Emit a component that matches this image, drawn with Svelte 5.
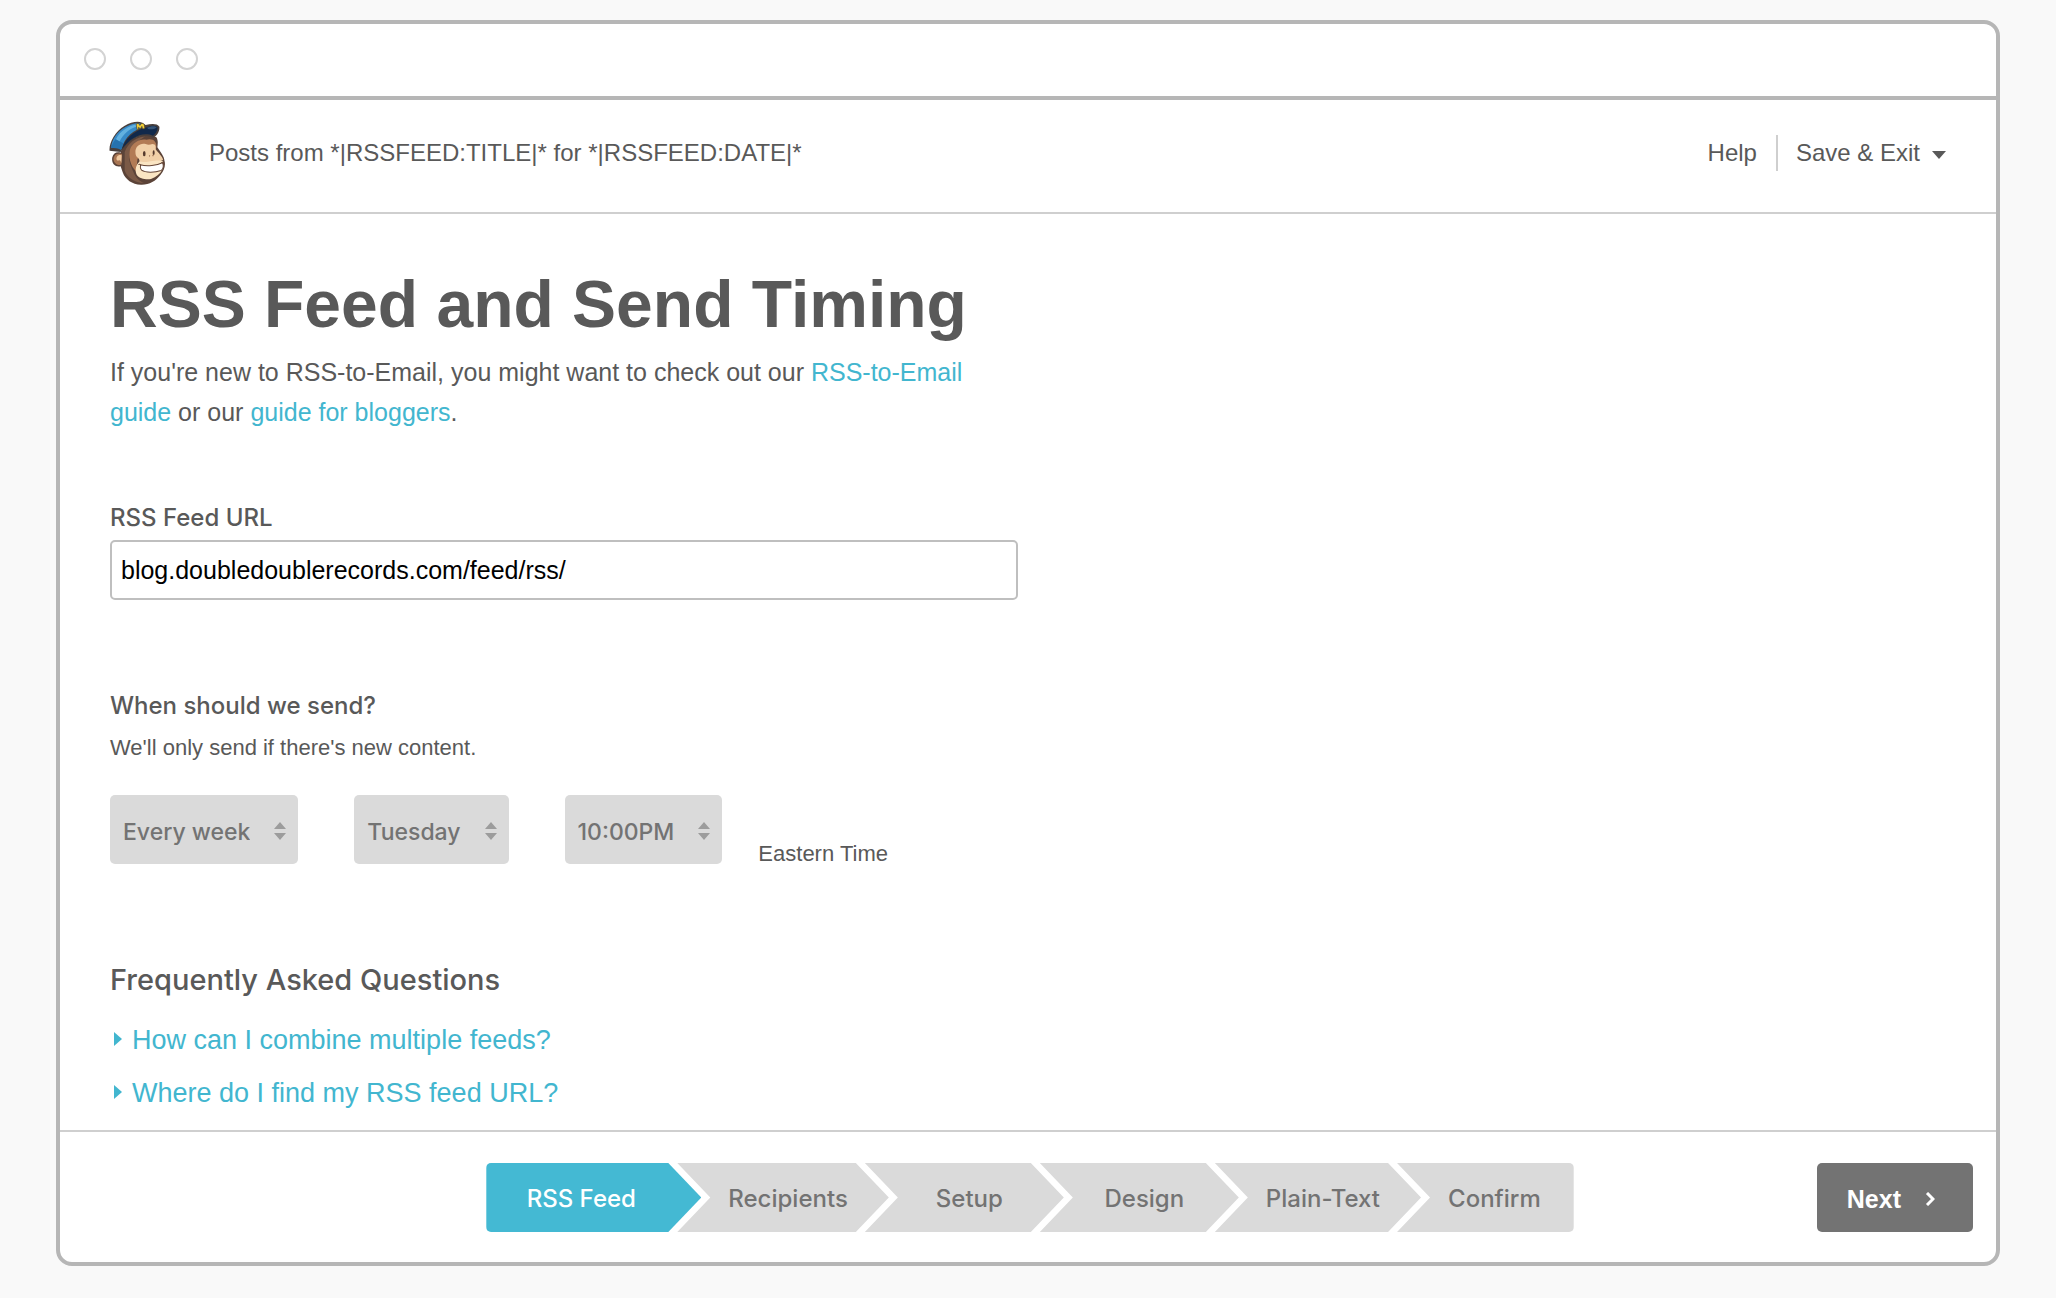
<script>
  let feedUrl = $state('blog.doubledoublerecords.com/feed/rss/')
  let frequency = $state('Every week')
  let day = $state('Tuesday')
  let time = $state('10:00PM')
  let current = $state('RSS Feed')

  const frequencies = ['Every day', 'Every week', 'Every month']
  const days = ['Monday', 'Tuesday', 'Wednesday', 'Thursday', 'Friday']
  const times = ['8:00PM', '9:00PM', '10:00PM', '11:00PM']
  const steps = ['RSS Feed', 'Recipients', 'Setup', 'Design', 'Plain-Text', 'Confirm']
  const questions = ['How can I combine multiple feeds?', 'Where do I find my RSS feed URL?']
</script>

{#snippet sorter()}
  <svg class="sorter" viewBox="0 0 12 20" aria-hidden="true">
    <path d="M6 1 12 8H0ZM6 19 0 12H12Z" />
  </svg>
{/snippet}

<div class="window">
  <div class="titlebar">
    <span class="dot"></span>
    <span class="dot"></span>
    <span class="dot"></span>
  </div>

  <header>
    <svg class="logo" viewBox="0 0 165 190" role="img" aria-label="Home">
      <!-- Head -->
      <path fill="#5b4338" d="M38 80C60 48 110 34 140 48C146 58 144 68 143 78C152 92 164 106 164 118C168 130 164 148 152 160C138 178 118 190 94 189C68 188 48 174 40 152L34 134C18 138 6 126 9 108C12 94 24 90 34 94Z" />
      <path fill="#7b5a47" d="M46 92C56 66 78 48 106 46C90 58 62 74 60 96C56 116 64 134 72 152C78 168 92 180 104 184C74 184 54 168 46 148Z" />
      <!-- Ear -->
      <path fill="#a87552" d="M38 98C24 92 12 102 13 114C14 126 24 132 36 130Z" />
      <path fill="#f0c9a0" d="M37 102C27 98 20 106 22 115C24 120 28 116 32 117C35 119 34 123 36 124Z" />
      <!-- Face -->
      <path fill="#b27b55" d="M62 84C70 64 92 52 110 56C128 50 144 60 139 82L120 96L84 112L80 150C62 132 56 104 62 84Z" />
      <path fill="#f1d0a8" d="M78 94C76 76 92 64 108 68C116 72 122 70 128 68C140 68 138 78 138 84C146 96 158 104 160 116C148 124 112 122 94 132C86 128 94 118 86 110C80 106 78 100 78 94Z" />
      <path fill="#fae5c3" d="M90 120C78 130 76 148 82 160C90 172 110 174 124 172C140 166 152 156 158 144L160 120C148 112 116 122 102 122Z" />
      <!-- Smile -->
      <path fill="#fff" stroke="#654536" stroke-width="3" stroke-linejoin="round" d="M93 130C112 136 142 132 158 124C162 130 162 142 154 147C134 154 108 154 96 146C91 140 92 134 93 130Z" />
      <path fill="none" stroke="#654536" stroke-width="3" stroke-linecap="round" d="M88 129Q92 127 94 132M156 123Q162 121 161 128" />
      <!-- Eyes and nose -->
      <ellipse cx="104" cy="97" rx="4" ry="8" fill="#563a2d" />
      <ellipse cx="132" cy="94" rx="3" ry="7" fill="#563a2d" />
      <path fill="none" stroke="#85543b" stroke-width="3" stroke-linecap="round" d="M120 103V104M130 102V103" />
      <!-- Cap -->
      <path fill="#493f3c" d="M1 88C-1 66 16 32 46 14C64 4 84 -1 98 5L108 12C124 8 142 6 149 17C150 32 142 44 130 50C102 36 62 48 34 92Z" />
      <path fill="#378ac7" d="M6 80C6 58 22 32 48 18C64 9 82 5 93 8L104 18C72 26 46 48 36 84C26 78 14 78 6 80Z" />
      <path fill="#63b1df" d="M20 54C32 30 58 14 82 10L90 14C62 20 42 38 30 62Z" />
      <path fill="#2672ae" d="M6 80C8 70 14 60 19 54L42 66L35 86C26 80 14 80 6 80Z" />
      <path fill="#11294b" d="M38 84C46 52 74 28 110 19C126 12 140 12 144 20C142 32 138 38 130 44C98 30 62 50 38 84Z" />
      <path fill="#355477" d="M112 20C122 15 136 13 141 19C136 24 124 26 116 24Z" />
      <path fill="#f2cf3a" stroke="#40382a" stroke-width="2" d="M80 10 86 6 91 13 97 6 104 10 106 22 99 24 97 16 93 23 87 19 87 26 83 26Z" />
    </svg>
    <span class="campaign">Posts from *|RSSFEED:TITLE|* for *|RSSFEED:DATE|*</span>
    <nav class="actions" aria-label="Campaign">
      <a href="#help">Help</a>
      <button type="button">
        Save &amp; Exit
        <svg class="caret" viewBox="0 0 14 12" aria-hidden="true"><path d="M0 4H14L7 12Z" /></svg>
      </button>
    </nav>
  </header>

  <main>
    <h1>RSS Feed and Send Timing</h1>
    <p class="intro">
      If you're new to RSS-to-Email, you might want to check out our <a href="#rss">RSS-to-Email guide</a>
      or our <a href="#bloggers">guide for bloggers</a>.
    </p>

    <div class="field">
      <label for="feed-url">RSS Feed URL</label>
      <input id="feed-url" type="text" bind:value={feedUrl} />
    </div>

    <section class="timing">
      <h2>When should we send?</h2>
      <p>We'll only send if there's new content.</p>
      <div class="selects">
        <div class="select">
          <select aria-label="Frequency" bind:value={frequency}>
            {#each frequencies as option}<option>{option}</option>{/each}
          </select>
          {@render sorter()}
        </div>
        <div class="select">
          <select aria-label="Day" bind:value={day}>
            {#each days as option}<option>{option}</option>{/each}
          </select>
          {@render sorter()}
        </div>
        <div class="select">
          <select aria-label="Time" bind:value={time}>
            {#each times as option}<option>{option}</option>{/each}
          </select>
          {@render sorter()}
        </div>
        <span class="zone">Eastern Time</span>
      </div>
    </section>

    <section class="faq">
      <h3>Frequently Asked Questions</h3>
      <ul>
        {#each questions as question}
          <li>
            <svg class="marker" viewBox="0 0 8 18" aria-hidden="true"><path d="M0 0 8 7 0 14Z" /></svg>
            <a href="#faq">{question}</a>
          </li>
        {/each}
      </ul>
    </section>
  </main>

  <footer>
    <nav class="steps" aria-label="Steps">
      {#each steps as step}
        <button type="button" class="step" class:active={current === step} onclick={() => (current = step)}>{step}</button>
      {/each}
    </nav>
    <button type="button" class="next">
      Next
      <svg viewBox="0 0 10 14" aria-hidden="true"><path d="M2 1 8 7 2 13" /></svg>
    </button>
  </footer>
</div>

<style>
  :global(body) {
    background: #f9f9f9;
    color: #595959;
    font: 25px/40px 'Liberation Sans', Arial, sans-serif;
  }
  :global(#app) {
    display: flex;
    box-sizing: border-box;
    min-height: 100vh;
    padding: 20px 56px 32px;
  }

  h1, h2, h3, p, ul { margin: 0; padding: 0; }
  a { color: #42b6cf; text-decoration: none; }
  button, input, select { font: inherit; color: inherit; }
  button { border: 0; background: none; padding: 0; cursor: pointer; }

  .window {
    flex: 1;
    display: flex;
    flex-direction: column;
    min-width: 0;
    background: #fff;
    border: 4px solid #b6b6b6;
    border-radius: 16px;
    overflow: hidden;
  }

  .titlebar {
    display: flex;
    align-items: center;
    gap: 24px;
    height: 70px;
    padding: 0 0 2px 24px;
    border-bottom: 4px solid #b6b6b6;
  }
  .dot {
    box-sizing: border-box;
    width: 22px;
    height: 22px;
    border: 2px solid #d3d3d3;
    border-radius: 50%;
  }

  header {
    display: flex;
    align-items: center;
    padding: 21px 50px 27px 49px;
    border-bottom: 2px solid #cfcfcf;
    font-size: 24px;
  }
  .logo { width: 56px; height: 64px; margin-right: 44px; }
  .actions {
    display: flex;
    align-items: center;
    margin-left: auto;
  }
  .actions a {
    color: inherit;
    line-height: 36px;
    padding-right: 19px;
    margin-right: 18px;
    border-right: 2px solid #cfcfcf;
  }
  .actions button { display: flex; align-items: center; gap: 12px; }
  .caret { width: 14px; height: 12px; fill: #595959; }

  main {
    flex: 1;
    padding: 50px 50px 4px;
  }
  h1 {
    font-size: 66px;
    line-height: 80px;
  }
  .intro { max-width: 880px; margin-top: 8px; }

  h2, h3, label, .select, .step {
    font-family: Inter, 'Liberation Sans', sans-serif;
    font-weight: 500;
  }
  h2, label { font-size: 24px; line-height: 40px; }

  .field {
    display: flex;
    flex-direction: column;
    max-width: 908px;
    margin-top: 66px;
  }
  input {
    box-sizing: border-box;
    height: 60px;
    margin-top: 2px;
    padding: 0 9px;
    color: #000;
    background: #fff;
    border: 2px solid #bfbfbf;
    border-radius: 5px;
  }

  .timing { margin-top: 86px; }
  .timing p { margin-top: 2px; font-size: 22px; line-height: 40px; }
  .selects {
    display: flex;
    align-items: flex-end;
    gap: 56px;
    margin-top: 27px;
  }
  .select {
    position: relative;
    font-size: 23px;
    color: #737373;
  }
  select {
    display: block;
    appearance: none;
    field-sizing: content;
    height: 69px;
    padding: 4px 48px 0 13px;
    background: #dadada;
    border: 0;
    border-radius: 5px;
  }
  .sorter {
    position: absolute;
    top: 26px;
    right: 12px;
    width: 12px;
    height: 20px;
    fill: #9c9c9c;
    pointer-events: none;
  }
  .zone {
    margin-left: -20px;
    font-size: 22px;
    line-height: 20px;
  }

  .faq { margin-top: 96px; }
  h3 { font-size: 29px; line-height: 40px; }
  ul { margin-top: 14px; list-style: none; }
  li {
    display: flex;
    align-items: center;
    gap: 10px;
    font-size: 27px;
    line-height: 53px;
    padding-left: 4px;
  }
  .marker { width: 8px; height: 18px; fill: #42b6cf; }

  footer {
    display: grid;
    grid-template-columns: 1fr auto 1fr;
    padding: 31px 23px 30px 27px;
    border-top: 2px solid #cfcfcf;
  }
  .steps {
    grid-column: 2;
    display: flex;
    border-radius: 5px;
    overflow: hidden;
  }
  .step {
    min-width: 199px;
    height: 69px;
    margin-left: -24px;
    padding: 3px 41px 0 51px;
    font-size: 24px;
    color: #737373;
    background: #dadada;
    clip-path: polygon(0 0, calc(100% - 33px) 0, 100% 50%, calc(100% - 33px) 100%, 0 100%, 33px 50%);
  }
  .step:first-child {
    min-width: 215px;
    margin-left: 0;
    padding: 3px 63px 0 38px;
    clip-path: polygon(0 0, calc(100% - 33px) 0, 100% 50%, calc(100% - 33px) 100%, 0 100%);
  }
  .step:last-child {
    min-width: 0;
    padding-right: 33px;
    clip-path: polygon(0 0, 100% 0, 100% 100%, 0 100%, 33px 50%);
  }
  .step.active { color: #fff; background: #44b9d3; }

  .next {
    justify-self: end;
    display: flex;
    align-items: center;
    gap: 24px;
    height: 69px;
    padding: 3px 38px 0 30px;
    color: #fff;
    font-weight: 700;
    background: #737373;
    border-radius: 5px;
  }
  .next svg {
    width: 10px;
    height: 14px;
    fill: none;
    stroke: #fff;
    stroke-width: 3;
  }
</style>
